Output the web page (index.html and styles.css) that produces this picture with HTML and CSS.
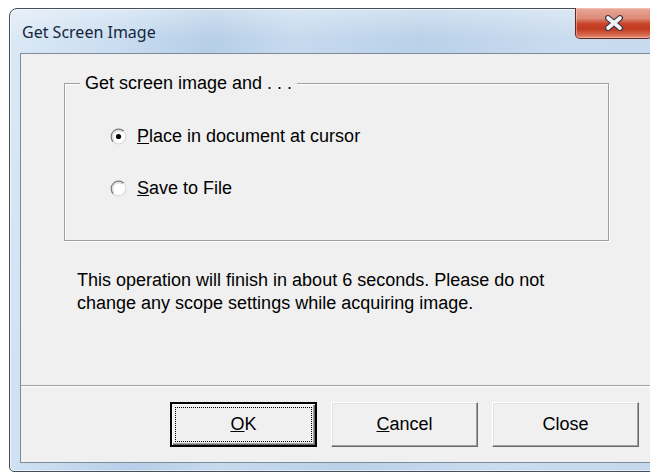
FILE: index.html
```html
<!DOCTYPE html>
<html lang="en">
<head>
<meta charset="utf-8">
<title>Get Screen Image</title>
<link rel="stylesheet" href="styles.css">
</head>
<body>
<div class="window">
  <div class="titlebar">
    <div class="title">Get Screen Image</div>
    <button class="close" type="button" aria-label="Close">
      <svg width="20" height="16" viewBox="0 0 20 16">
        <path d="M4 3 L16 13 M16 3 L4 13" stroke="#3b3b46" stroke-width="6" stroke-linecap="round"/>
        <path d="M4 3 L16 13 M16 3 L4 13" stroke="#f4f4f6" stroke-width="3.6" stroke-linecap="round"/>
      </svg>
    </button>
  </div>
  <div class="client">
    <fieldset class="group">
      <legend class="group-title">Get screen image and . . .</legend>
      <div class="options">
        <label class="option">
          <svg class="radio" width="17" height="17" viewBox="0 0 17 17">
            <circle cx="8.5" cy="8.5" r="7.5" fill="#fff"/>
            <path d="M3.2 13.8 A7.5 7.5 0 0 1 13.8 3.2" fill="none" stroke="#7a7a7a" stroke-width="1.2"/>
            <path d="M13.8 3.2 A7.5 7.5 0 0 1 3.2 13.8" fill="none" stroke="#dcdcdc" stroke-width="1.2"/>
            <path d="M4.2 12.8 A6.1 6.1 0 0 1 12.8 4.2" fill="none" stroke="#c8c8c8" stroke-width="1"/>
            <circle cx="8.5" cy="8.5" r="2.6" fill="#000"/>
          </svg>
          <span><u>P</u>lace in document at cursor</span>
        </label>
        <label class="option">
          <svg class="radio" width="17" height="17" viewBox="0 0 17 17">
            <circle cx="8.5" cy="8.5" r="7.5" fill="#fff"/>
            <path d="M3.2 13.8 A7.5 7.5 0 0 1 13.8 3.2" fill="none" stroke="#7a7a7a" stroke-width="1.2"/>
            <path d="M13.8 3.2 A7.5 7.5 0 0 1 3.2 13.8" fill="none" stroke="#dcdcdc" stroke-width="1.2"/>
            <path d="M4.2 12.8 A6.1 6.1 0 0 1 12.8 4.2" fill="none" stroke="#c8c8c8" stroke-width="1"/>
          </svg>
          <span><u>S</u>ave to File</span>
        </label>
      </div>
    </fieldset>
    <p class="note">This operation will finish in about 6 seconds. Please do not<br>change any scope settings while acquiring image.</p>
    <div class="footer">
      <button class="btn btn-default" type="button"><span class="focus"><u>O</u>K</span></button>
      <button class="btn" type="button"><span class="focus"><u>C</u>ancel</span></button>
      <button class="btn" type="button"><span class="focus">Close</span></button>
    </div>
  </div>
</div>
</body>
</html>
```
FILE: styles.css
```css
html, body {
  margin: 0;
  padding: 0;
  background: #fff;
  overflow: hidden;
  width: 650px;
  height: 472px;
}

.window {
  box-sizing: border-box;
  margin: 8px 0 0 9px;
  width: 680px;
  height: 464px;
  display: flex;
  flex-direction: column;
  padding: 0 10px 8px 10px;
  border: 1px solid #454f5b;
  border-radius: 8px 8px 0 5px;
  box-shadow: inset 0 0 0 1px rgba(255, 255, 255, 0.55);
  background:
    linear-gradient(180deg, rgba(255, 255, 255, 0.35) 0px, rgba(255, 255, 255, 0) 30px),
    linear-gradient(100deg, #dce9f6 0%, #cbdef1 14%, #b6cee7 27%, #c6daee 38%, #bad1e9 55%, #cadcef 75%, #c3d7ec 100%);
}

.titlebar {
  height: 44px;
  flex: none;
  display: flex;
  align-items: flex-start;
}

.title {
  padding: 13px 0 0 2px;
  font-family: "Noto Sans", "Open Sans", sans-serif;
  font-size: 16px;
  line-height: 20px;
  color: #15263a;
}

.close {
  margin: -1px 26px 0 auto;
  width: 77px;
  height: 31px;
  padding: 0;
  display: flex;
  align-items: center;
  justify-content: center;
  border: 1px solid #5c2a22;
  border-top: none;
  border-radius: 0 0 5px 5px;
  box-shadow: inset 0 0 0 1px rgba(255, 220, 210, 0.45);
  background: linear-gradient(180deg, #e9a89a 0%, #dc8a76 35%, #c9442a 52%, #c13a20 70%, #d4654a 88%, #e38c74 100%);
}

.close svg {
  display: block;
}

.client {
  flex: 1;
  display: flex;
  flex-direction: column;
  background: #f0f0f0;
  border: 1px solid #7d8b9b;
  font-family: "Liberation Sans", Arial, sans-serif;
  font-size: 18px;
  color: #000;
}

.group {
  box-sizing: border-box;
  margin: 19px 0 0 43px;
  width: 545px;
  height: 168px;
  padding: 0;
  border: 1px solid #a0a0a0;
  box-shadow: 1px 1px 0 #fff, inset 1px 1px 0 #fff;
}

.group-title {
  margin-left: 15px;
  padding: 0 5px;
  line-height: 21px;
  background: #f0f0f0;
}

.options {
  display: flex;
  flex-direction: column;
  gap: 31px;
  margin: 32px 0 0 45px;
}

.option {
  display: flex;
  align-items: center;
  gap: 10px;
  height: 21px;
  line-height: 21px;
}

.radio {
  display: block;
  flex: none;
}

.note {
  margin: 28px 0 0 56px;
  line-height: 23px;
}

.footer {
  margin-top: auto;
  display: flex;
  gap: 14px;
  padding: 16px 0 15px 149px;
  border-top: 1px solid #a0a0a0;
  box-shadow: inset 0 1px 0 #fff;
}

.btn {
  box-sizing: border-box;
  width: 147px;
  height: 45px;
  padding: 0;
  display: flex;
  background: #f0f0f0;
  border: 1px solid;
  border-color: #fff #696969 #696969 #fff;
  box-shadow: inset -1px -1px 0 #a0a0a0, inset 1px 1px 0 #e3e3e3;
  font-family: "Liberation Sans", Arial, sans-serif;
  font-size: 18px;
  color: #000;
}

.focus {
  flex: 1;
  margin: 4px;
  display: flex;
  align-items: center;
  justify-content: center;
  border: 1px solid transparent;
}

.btn-default {
  border: 2px solid #000;
  box-shadow: inset 1px 1px 0 #fff, inset -1px -1px 0 #696969, inset -2px -2px 0 #a0a0a0;
}

.btn-default .focus {
  margin: 3px;
  border: 1px dotted #000;
}
```
